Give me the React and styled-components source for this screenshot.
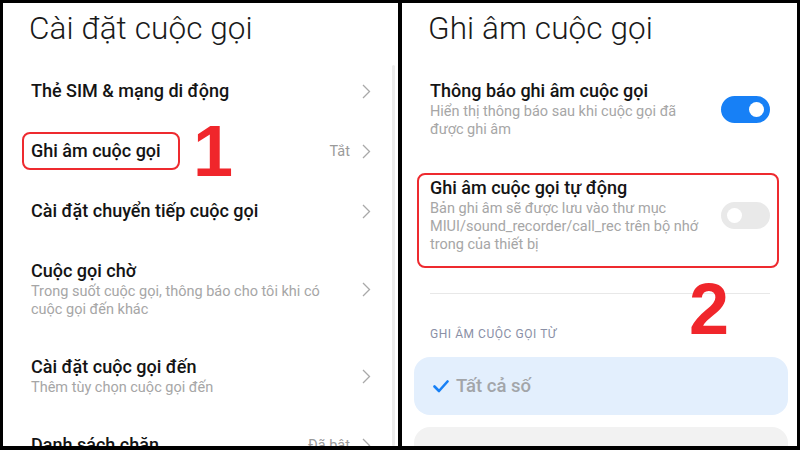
import React from "react"
import styled, { createGlobalStyle } from "styled-components"

const Global = createGlobalStyle`
  html, body { margin: 0; padding: 0; background: #000; }
  body { font-family: Roboto, "Noto Sans", sans-serif; }
`

const Frame = styled.div`
  width: 800px;
  height: 450px;
  box-sizing: border-box;
  background: #000;
  padding: 3px 3px 4px 3px;
  display: grid;
  grid-template-columns: 395px 395px;
  column-gap: 4px;
  overflow: hidden;
`

const Panel = styled.div`
  position: relative;
  background: #fff;
  overflow: hidden;
  padding: ${p => p.$pad};
`

const Title = styled.h1`
  margin: 0 0 12px -2px;
  padding-top: 6px;
  font-weight: 300;
  font-size: 31.5px;
  line-height: 40px;
  color: #1a1a1a;
  letter-spacing: 0.1px;
`

const Scroll = styled.div`
  position: absolute;
  right: 3px;
  top: 62px;
  bottom: 0;
  width: 3px;
  background: #ececec;
  border-radius: 2px;
`

const Row = styled.div`
  position: relative;
  display: flex;
  align-items: center;
  padding: 18px 0;
`

const Texts = styled.div`
  flex: 1;
  min-width: 0;
`

const Label = styled.div`
  font-size: 18px;
  line-height: 24px;
  font-weight: 500;
  color: #141414;
`

const Boxed = styled.span`
  display: inline-block;
  margin: -8px 0 -8px -9px;
  padding: 5px 17px 5px 7px;
  border: 2px solid #ee2a2f;
  border-radius: 8px;
`

const Sub = styled.div`
  font-size: 14.5px;
  line-height: 18px;
  color: #a6a6a6;
  max-width: ${p => p.$max || "none"};
`

const Value = styled.span`
  font-size: 14.5px;
  color: #9a9a9a;
  margin-right: 12px;
`

const Mark = styled.span`
  position: absolute;
  left: ${p => p.$left}px;
  top: ${p => p.$top}px;
  font-family: "Liberation Sans", Arial, sans-serif;
  font-weight: 700;
  font-size: 72px;
  line-height: 1;
  color: #f0262b;
`

const HiBox = styled.div`
  display: flex;
  align-items: center;
  margin: 16px -9px 0 -13px;
  padding: 1px 7px 12px 11px;
  border: 2px solid #ee2a2f;
  border-radius: 8px;
`

const Switch = styled.div`
  width: 49px;
  height: 27px;
  border-radius: 14px;
  background: ${p => (p.$on ? "#1780f6" : "#e9e9e9")};
  display: flex;
  align-items: center;
  justify-content: ${p => (p.$on ? "flex-end" : "flex-start")};
  padding: 0 6px;
  box-sizing: border-box;
  flex-shrink: 0;
`

const Knob = styled.div`
  width: 15px;
  height: 15px;
  border-radius: 50%;
  background: #fff;
`

const Section = styled.div`
  position: relative;
  border-top: 1px solid #e8e8e8;
  margin-top: 25px;
  padding-top: 32px;
`

const Caption = styled.div`
  font-size: 12px;
  line-height: 16px;
  color: #8a90a6;
  letter-spacing: 0.55px;
`

const Choice = styled.div`
  display: flex;
  align-items: center;
  gap: 7px;
  height: 58px;
  margin: ${p => p.$first ? "15px" : "12px"} -18px 0 -16px;
  padding-left: 19px;
  border-radius: 16px;
  background: ${p => (p.$active ? "#e3effd" : "#f2f2f2")};
  font-size: 18.5px;
  font-weight: 500;
  color: #a2a5a9;
`

const Chevron = () => (
  <svg width="9" height="15" viewBox="0 0 9 15" fill="none">
    <path d="M1 1l6.5 6.5L1 14" stroke="#a9a9a9" strokeWidth="1.3" />
  </svg>
)

const Check = () => (
  <svg width="16" height="13" viewBox="0 0 16 13" fill="none">
    <path d="M1.5 6.5l4.5 4.5L14.5 1.5" stroke="#1780f6" strokeWidth="2.6" strokeLinecap="round" strokeLinejoin="round" />
  </svg>
)

const calls = [
  { label: "Thẻ SIM & mạng di động" },
  { label: "Ghi âm cuộc gọi", value: "Tắt", boxed: true },
  { label: "Cài đặt chuyển tiếp cuộc gọi" },
  { label: "Cuộc gọi chờ", sub: "Trong suốt cuộc gọi, thông báo cho tôi khi có cuộc gọi đến khác" },
  { label: "Cài đặt cuộc gọi đến", sub: "Thêm tùy chọn cuộc gọi đến" },
  { label: "Danh sách chặn", value: "Đã bật" },
]

export default function App() {
  return (
    <>
      <Global />
      <Frame>
        <Panel $pad="0 27px 0 28px">
          <Title>Cài đặt cuộc gọi</Title>
          {calls.map(c => (
            <Row key={c.label}>
              <Texts>
                <Label>{c.boxed ? <Boxed>{c.label}</Boxed> : c.label}</Label>
                {c.sub && <Sub $max="305px">{c.sub}</Sub>}
              </Texts>
              {c.value && <Value>{c.value}</Value>}
              <Chevron />
              {c.boxed && <Mark $left={162} $top={-6}>1</Mark>}
            </Row>
          ))}
          <Scroll />
        </Panel>
        <Panel $pad="0 27px 0 28px">
          <Title>Ghi âm cuộc gọi</Title>
          <Row>
            <Texts>
              <Label>Thông báo ghi âm cuộc gọi</Label>
              <Sub $max="270px">Hiển thị thông báo sau khi cuộc gọi đã được ghi âm</Sub>
            </Texts>
            <Switch $on><Knob /></Switch>
          </Row>
          <HiBox>
            <Texts>
              <Label>Ghi âm cuộc gọi tự động</Label>
              <Sub $max="290px">Bản ghi âm sẽ được lưu vào thư mục MIUI/sound_recorder/call_rec trên bộ nhớ trong của thiết bị</Sub>
            </Texts>
            <Switch><Knob /></Switch>
          </HiBox>
          <Section>
            <Mark $left={259} $top={-21}>2</Mark>
            <Caption>GHI ÂM CUỘC GỌI TỪ</Caption>
            <Choice $first $active><Check />Tất cả số</Choice>
            <Choice />
          </Section>
        </Panel>
      </Frame>
    </>
  )
}
